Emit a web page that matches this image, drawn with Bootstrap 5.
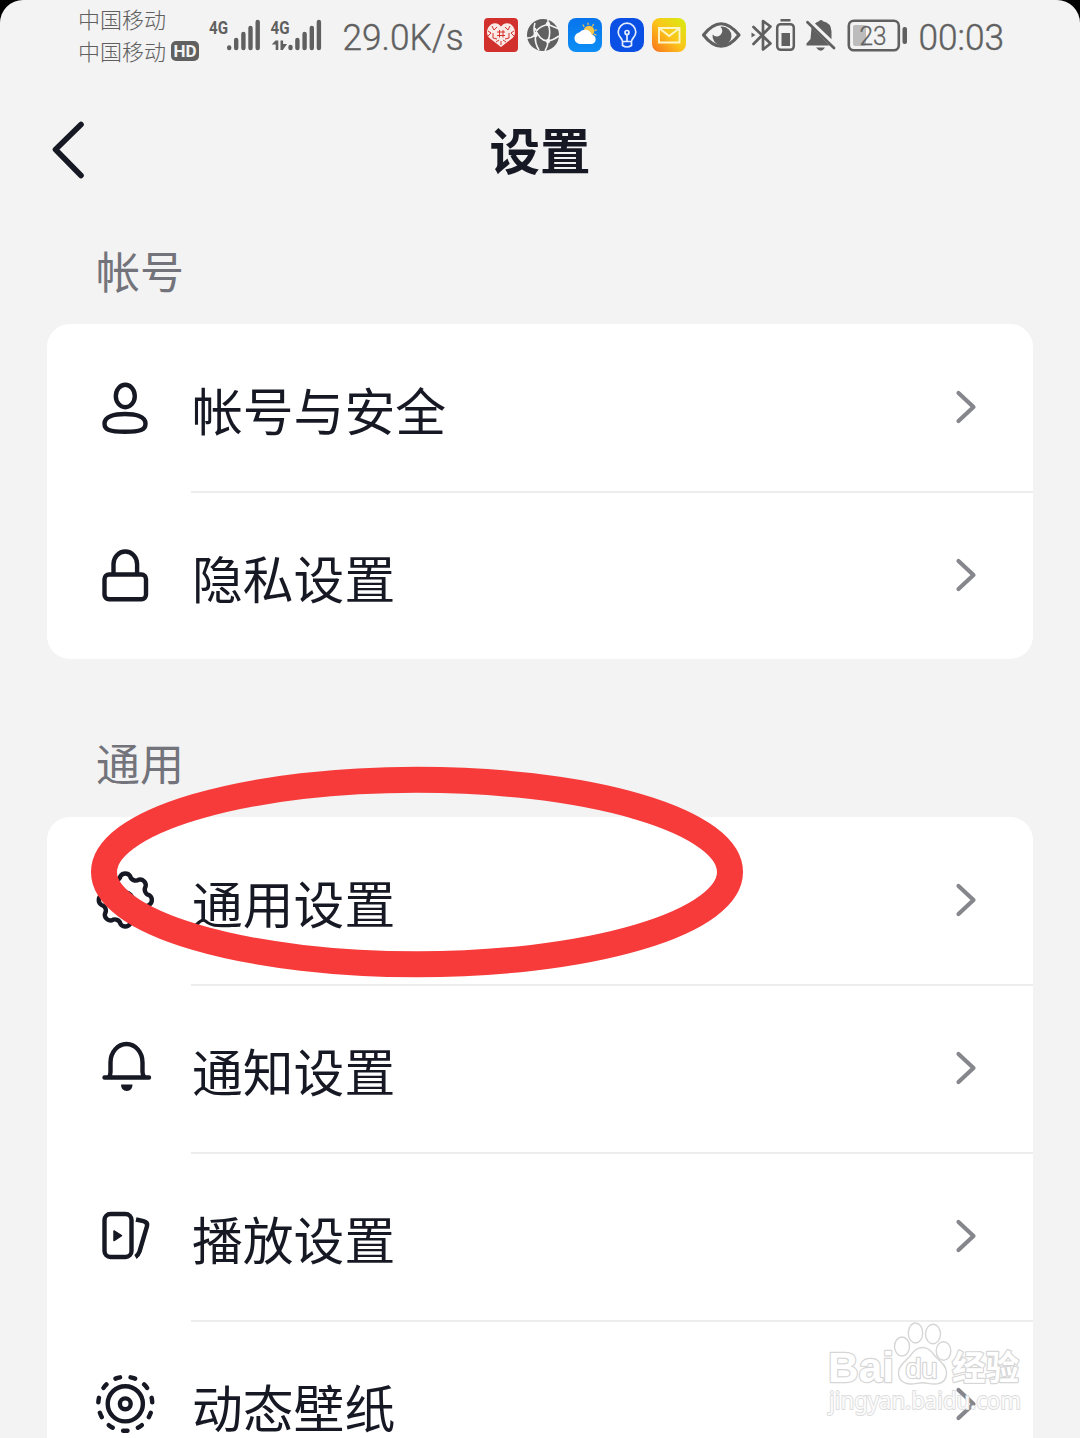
<!DOCTYPE html>
<html lang="zh-CN">
<head>
<meta charset="utf-8">
<meta name="viewport" content="width=device-width, initial-scale=1">
<title>设置</title>
<link href="https://cdn.jsdelivr.net/npm/bootstrap@5.3.0/dist/css/bootstrap.min.css" rel="stylesheet">
<style>
  body { background: #000; color: #161823; font-family: "Noto Sans CJK SC", sans-serif; height: 1438px; }
  .screen { background: #f3f3f3; width: 1080px; height: 1438px; border-radius: 23px 23px 0 0; }
  .statusbar { height: 72px; color: #606060; }
  .statusbar svg { flex: none; }
  .carriers { width: 204px; padding: 2px 0 0 78px; font-size: 22px; font-weight: 300; line-height: 32px; }
  .hd { background: #606060; color: #f3f3f3; border-radius: 5px; width: 28px; height: 20px; font: 700 17px/20px Roboto, sans-serif; margin: 7px 0 0 5px; }
  .titlebar { height: 156px; padding: 0 47px; }
  .titlebar h1 { font-size: 50.5px; line-height: 152px; height: 156px; }
  .titlebar .side { width: 44px; }
  .group-label { color: #73747b; font-size: 44px; line-height: 60px; padding-left: 96px; }
  .label-first { padding-top: 12px; height: 96px; }
  .label-next { padding-top: 73px; height: 158px; }
  .settings { margin: 0 47px; width: 986px; height: 335px; border-radius: 23px; overflow: hidden; background: #fff; }
  .entry { height: 168px; flex: none; padding-left: 48px; color: #161823; }
  .entry .ico { width: 60px; height: 60px; flex: none; }
  .entry .body-part { margin-left: 36px; height: 170px; padding: 0 56px 0 1px; border-bottom: 2px solid #ededee; }
  .entry:last-child .body-part { border-bottom-color: transparent; }
  .entry .txt { font-size: 50.8px; line-height: 72px; padding-top: 3px; }
  .line { fill: none; stroke: #161823; stroke-width: 4.4; stroke-linecap: round; stroke-linejoin: round; }
  .back-line { stroke-width: 5.6; }
  .butt-line { stroke-linecap: butt; }
  .chev { fill: none; stroke: #86878c; stroke-width: 4.2; stroke-linecap: round; stroke-linejoin: round; }
  .last-group { height: 621px; border-bottom-left-radius: 0; border-bottom-right-radius: 0; }
  .overlay { pointer-events: none; }
  .wm { fill: #fff; stroke: #d6d6d6; stroke-width: 1.4; stroke-linejoin: round; }
  .wm text { paint-order: stroke; stroke-width: 2.4; }
  .wm .wm-url { stroke-width: 1.8; stroke: #dcdcdc; fill-opacity: .9; }
</style>
</head>
<body class="m-0 overflow-hidden">
<main class="screen position-relative overflow-hidden">
  <header class="statusbar d-flex align-items-start">
    <div class="carriers flex-shrink-0">
      <div>中国移动</div>
      <div class="d-flex text-nowrap"><span>中国移动</span><span class="hd text-center">HD</span></div>
    </div>
    <!-- signal strength and network speed -->
    <svg width="272" height="72" viewBox="204 0 272 72" fill="currentColor" font-family="Roboto, sans-serif">
      <g font-weight="700" font-size="19">
        <text x="209" y="34" textLength="19" lengthAdjust="spacingAndGlyphs">4G</text>
        <text x="270.500" y="34" textLength="19" lengthAdjust="spacingAndGlyphs">4G</text>
      </g>
      <g fill="none" stroke="currentColor" stroke-width="4.400" stroke-linecap="round">
        <path d="M229.200 47.500v.5M236.200 40v8M243.400 34v14M250.500 28v20M257.700 22v26"/>
        <path d="M290.500 47v1M297.400 40v8M304.600 34v14M311.800 28v20M318.900 22v26"/>
      </g>
      <path d="M275.500 40.500h2.800V50h-2.600v-5.500h-4zM280.500 40.500h2.600v3.500h4l-4 5.500v.5h-2.600z"/>
      <text x="342.500" y="50" font-size="37" font-weight="300" stroke="currentColor" stroke-width=".4" textLength="121" lengthAdjust="spacingAndGlyphs">29.0K/s</text>
    </svg>
    <!-- notification icons -->
    <svg width="218" height="72" viewBox="476 0 218 72">
      <defs>
        <linearGradient id="mailBg" x1="0" y1="1" x2="1" y2="0"><stop stop-color="#f9701c"/><stop offset=".5" stop-color="#fbc51a"/><stop offset="1" stop-color="#d5ee12"/></linearGradient>
        <linearGradient id="skyBg" x1="0" y1="0" x2="0" y2="1"><stop stop-color="#0874ec"/><stop offset="1" stop-color="#0c8ef5"/></linearGradient>
      </defs>
      <rect x="484" y="18" width="34" height="34" rx="4" fill="#d1302c"/>
      <path d="M501 26.500c-3-4.500-9-4.500-12 0-3 4-2.500 9 1 12l11 8.500 11-8.500c3.500-3 4-8 1-12-3-4.500-9-4.500-12 0z" fill="#fbe9e6"/>
      <path d="M488 31l3 2-3 3M492 26l2 4 3-3M514 31l-3 2 3 3M510 26l-2 4-3-3M497 32h8M497 35.500h8M499.500 30v7.500M503 30v7.500M493 33v5l4 1M509 33v5l-4 1M496 42l3-2M506 42l-3-2M501 41v4" stroke="#d1302c" stroke-width="1" fill="none"/>
      <circle cx="543" cy="35" r="16" fill="#606060"/>
      <path d="M548 18.500q.5 4-1 6-11 3-12 10.500-3 3-8 3M535 28q4 12 12 13 5 0 12-5M548 24q3.500 8 0 17 0 5-3 10M535.500 36q-1 7 3.500 14M547 24l12 5M535 35q-2-6 0-12" fill="none" stroke="#f3f3f3" stroke-width="1.600"/>
      <g fill="#f3f3f3"><circle cx="548" cy="24" r="2.200"/><circle cx="535.500" cy="35" r="2.200"/><circle cx="548" cy="41" r="2.200"/></g>
      <rect x="568" y="18" width="34" height="34" rx="8" fill="url(#skyBg)"/>
      <circle cx="589" cy="31" r="5.300" fill="#f8c64a"/>
      <path d="M588 23v1.500M593.500 24.500l-1 1.500M583 25l1 1.500M596.500 30l-1.500.4M596 35l-1.500-.7" stroke="#f8c64a" stroke-width="1.200" stroke-linecap="round"/>
      <path d="M580 44a5.800 5.800 0 0 1-.8-11.500 7.200 7.200 0 0 1 12.600 2.300A4.700 4.700 0 0 1 592 44z" fill="#fff"/>
      <rect x="610" y="18" width="34" height="34" rx="10" fill="#0b50e4"/>
      <g fill="none" stroke="#e4edff" stroke-width="1.700" stroke-linecap="round" stroke-linejoin="round">
        <path d="M622.500 41.500c0-3.500-4.300-4-4.300-9.500a8.800 8.800 0 0 1 17.600 0c0 5.500-4.300 6-4.300 9.500zM622.500 42v3.500q4.500 3 9 0V42M627 41v-6"/><circle cx="627" cy="32.500" r="2"/>
      </g>
      <rect x="652" y="18" width="34" height="34" rx="8" fill="url(#mailBg)"/>
      <path d="M659 28h20.500v14.500H659zM659.500 28.500l9.700 7.500 9.800-7.500" fill="none" stroke="#fff6c8" stroke-width="1.900"/>
    </svg>
    <!-- eye, bluetooth, mute, battery, clock -->
    <svg width="386" height="72" viewBox="694 0 386 72" fill="currentColor" font-family="Roboto, sans-serif">
      <path d="M703.500 35q17.500-22.500 35.500 0-18 22.500-35.500 0z" fill="none" stroke="currentColor" stroke-width="3.200" stroke-linejoin="round"/>
      <path d="M722 26.500a9.500 9.500 0 1 1-9.400 8q3.800 3.800 7.800.4 3.800-4.400 0-8.200z"/>
      <path d="M753.500 27l17 16.500-7.500 6V21l7.500 5.500-17 17.500" fill="none" stroke="currentColor" stroke-width="2.700" stroke-linecap="round" stroke-linejoin="round"/>
      <path d="M751.500 32.500l4 2.500-4 2.500z"/>
      <rect x="777.200" y="24.200" width="16.600" height="25.600" rx="3.500" fill="none" stroke="currentColor" stroke-width="2.500"/>
      <path d="M780.500 19h10v2.500h-10zM781.500 33h8.500v13h-8.500z"/>
      <path d="M811.500 27.500l18 18H806.500v-2l4-4.500zM815 23.500q1.500-1.500 4-2.200 2-2.800 4 0 8 1.500 8.500 10v8zM816 47.500h9q-4 6.500-9 0z"/>
      <path d="M807.500 22.200l26.500 25.800" fill="none" stroke="currentColor" stroke-width="2.800" stroke-linecap="round"/>
      <rect x="853" y="25" width="13" height="21" rx="2" fill="#bcbcbc"/>
      <rect x="848.800" y="20.800" width="50" height="29.400" rx="5" fill="none" stroke="currentColor" stroke-width="2.600"/>
      <rect x="902.500" y="27" width="4.500" height="17" rx="2"/>
      <text x="859.500" y="45.200" font-size="26" font-weight="300" stroke="currentColor" stroke-width=".3" textLength="27" lengthAdjust="spacingAndGlyphs">23</text>
      <text x="918.500" y="49.500" font-size="36" font-weight="300" stroke="currentColor" stroke-width=".4" textLength="85.500" lengthAdjust="spacingAndGlyphs">00:03</text>
    </svg>
  </header>

  <nav class="titlebar d-flex justify-content-between align-items-center">
    <svg class="side" height="66" viewBox="0 0 44 66"><path class="line back-line" d="M34 7.500L8.500 32.500 34 58.500"/></svg>
    <h1 class="m-0 fw-bold">设置</h1>
    <span class="side"></span>
  </nav>

  <div class="group-label label-first">帐号</div>
  <div class="list-group list-group-flush settings">
    <div class="entry d-flex align-items-center">
      <svg class="ico" viewBox="0 0 60 60"><g class="line"><ellipse cx="30.300" cy="18" rx="9.500" ry="11.200"/><path d="M30 36c10 0 20.500 2.300 20.500 9.700 0 6-5 8-20.500 8s-20.500-2-20.500-8C9.500 38.300 20 36 30 36z"/></g></svg>
      <div class="body-part d-flex flex-grow-1 align-items-center justify-content-between"><span class="txt">帐号与安全</span><svg width="22" height="36" viewBox="0 0 22 36"><path class="chev" d="M3.500 4L18.500 18 3.500 32"/></svg></div>
    </div>
    <div class="entry d-flex align-items-center">
      <svg class="ico" viewBox="0 0 60 60"><g class="line"><path d="M18.500 27V18a11.800 12.500 0 0 1 23.600 0v9"/><rect x="9.500" y="28.500" width="41.500" height="24.800" rx="4.500"/></g></svg>
      <div class="body-part d-flex flex-grow-1 align-items-center justify-content-between"><span class="txt">隐私设置</span><svg width="22" height="36" viewBox="0 0 22 36"><path class="chev" d="M3.500 4L18.500 18 3.500 32"/></svg></div>
    </div>
  </div>

  <div class="group-label label-next">通用</div>
  <div class="list-group list-group-flush settings last-group">
    <div class="entry d-flex align-items-center">
      <svg class="ico" viewBox="0 0 60 60"><g class="line" transform="translate(30.300 29)"><path d="M-4.780-24.030A5.800 5.800 0 0 1 4.780-24.030A5.800 5.800 0 0 0 13.610-20.370A5.800 5.800 0 0 1 20.370-13.610A5.800 5.800 0 0 0 24.030-4.780A5.800 5.800 0 0 1 24.030 4.780A5.800 5.800 0 0 0 20.370 13.610A5.800 5.800 0 0 1 13.610 20.370A5.800 5.800 0 0 0 4.780 24.030A5.800 5.800 0 0 1-4.780 24.030A5.800 5.800 0 0 0-13.610 20.370A5.800 5.800 0 0 1-20.370 13.610A5.800 5.800 0 0 0-24.030 4.780A5.800 5.800 0 0 1-24.030-4.780A5.800 5.800 0 0 0-20.370-13.610A5.800 5.800 0 0 1-13.610-20.370A5.800 5.800 0 0 0-4.780-24.030z"/><circle r="7.500"/></g></svg>
      <div class="body-part d-flex flex-grow-1 align-items-center justify-content-between"><span class="txt">通用设置</span><svg width="22" height="36" viewBox="0 0 22 36"><path class="chev" d="M3.500 4L18.500 18 3.500 32"/></svg></div>
    </div>
    <div class="entry d-flex align-items-center">
      <svg class="ico" viewBox="0 0 60 60"><path class="line" d="M9.500 38.500h44.500M14 38q1.500-2 1.500-5V23.500a16 18.500 0 0 1 32 0V33q0 3 1.900 5"/><path d="M26 45.500h11.500q0 6.500-5.700 6.500T26 45.500z" fill="#161823"/></svg>
      <div class="body-part d-flex flex-grow-1 align-items-center justify-content-between"><span class="txt">通知设置</span><svg width="22" height="36" viewBox="0 0 22 36"><path class="chev" d="M3.500 4L18.500 18 3.500 32"/></svg></div>
    </div>
    <div class="entry d-flex align-items-center">
      <svg class="ico" viewBox="0 0 60 60"><rect class="line" x="9.500" y="7" width="27" height="43" rx="6"/><path class="line butt-line" d="M41 12.500l7.500 1.700q4.500 1.200 3.500 5L44.500 44.500q-1.500 4-4 5.500"/><path d="M19 24l7.500 4.700-7.500 4.800z" fill="#161823" stroke="#161823" stroke-width="1.500" stroke-linejoin="round"/></svg>
      <div class="body-part d-flex flex-grow-1 align-items-center justify-content-between"><span class="txt">播放设置</span><svg width="22" height="36" viewBox="0 0 22 36"><path class="chev" d="M3.500 4L18.500 18 3.500 32"/></svg></div>
    </div>
    <div class="entry d-flex align-items-center">
      <svg class="ico" viewBox="0 0 60 60"><g class="line"><circle cx="30.300" cy="28.800" r="17.600"/><circle cx="30.300" cy="28.800" r="5.400"/><circle cx="30.300" cy="28.800" r="27" pathLength="110" stroke-dasharray="3 7" stroke-dashoffset="1.500" transform="rotate(90 30.300 28.800)"/></g></svg>
      <div class="body-part d-flex flex-grow-1 align-items-center justify-content-between"><span class="txt">动态壁纸</span><svg width="22" height="36" viewBox="0 0 22 36"><path class="chev" d="M3.500 4L18.500 18 3.500 32"/></svg></div>
    </div>
  </div>

  <!-- hand-drawn highlight ring and site watermark lie over the list -->
  <svg class="overlay position-absolute top-0 start-0" width="1080" height="1438" viewBox="0 0 1080 1438">
    <ellipse cx="417" cy="872" rx="313" ry="92.300" fill="none" stroke="#f73b3b" stroke-width="26"/>
    <g class="wm">
      <text x="828" y="1382" font-family="Liberation Sans, sans-serif" font-weight="700" font-size="43" textLength="66" lengthAdjust="spacingAndGlyphs">Bai</text>
      <ellipse cx="902" cy="1346.500" rx="7.500" ry="9.500"/><ellipse cx="915.500" cy="1333" rx="7.200" ry="10"/><ellipse cx="933" cy="1334" rx="7.500" ry="9.700"/><ellipse cx="943.500" cy="1351" rx="7.300" ry="9.300"/>
      <path d="M922.500 1347.500c6 0 9 4 12 8 4 5 12 9 12 17 0 8-5 11.500-12 11.500-5 0-8-1.200-12-1.200s-7 1.200-12 1.200c-7 0-12-4-12-11.500 0-7 7-11 12-17 3-4 6-8 12-8z"/>
      <text x="905.500" y="1378" font-family="Liberation Sans, sans-serif" font-size="27" textLength="32" lengthAdjust="spacingAndGlyphs">du</text>
      <text x="952" y="1380" font-family="Noto Sans CJK SC, sans-serif" font-weight="700" font-size="34" textLength="67" lengthAdjust="spacingAndGlyphs">经验</text>
      <text class="wm-url" x="829" y="1408.500" font-family="Noto Sans, sans-serif" font-size="23" textLength="192" lengthAdjust="spacingAndGlyphs">jingyan.baidu.com</text>
    </g>
  </svg>
</main>
<script src="https://cdn.jsdelivr.net/npm/bootstrap@5.3.0/dist/js/bootstrap.bundle.min.js"></script>
</body>
</html>
